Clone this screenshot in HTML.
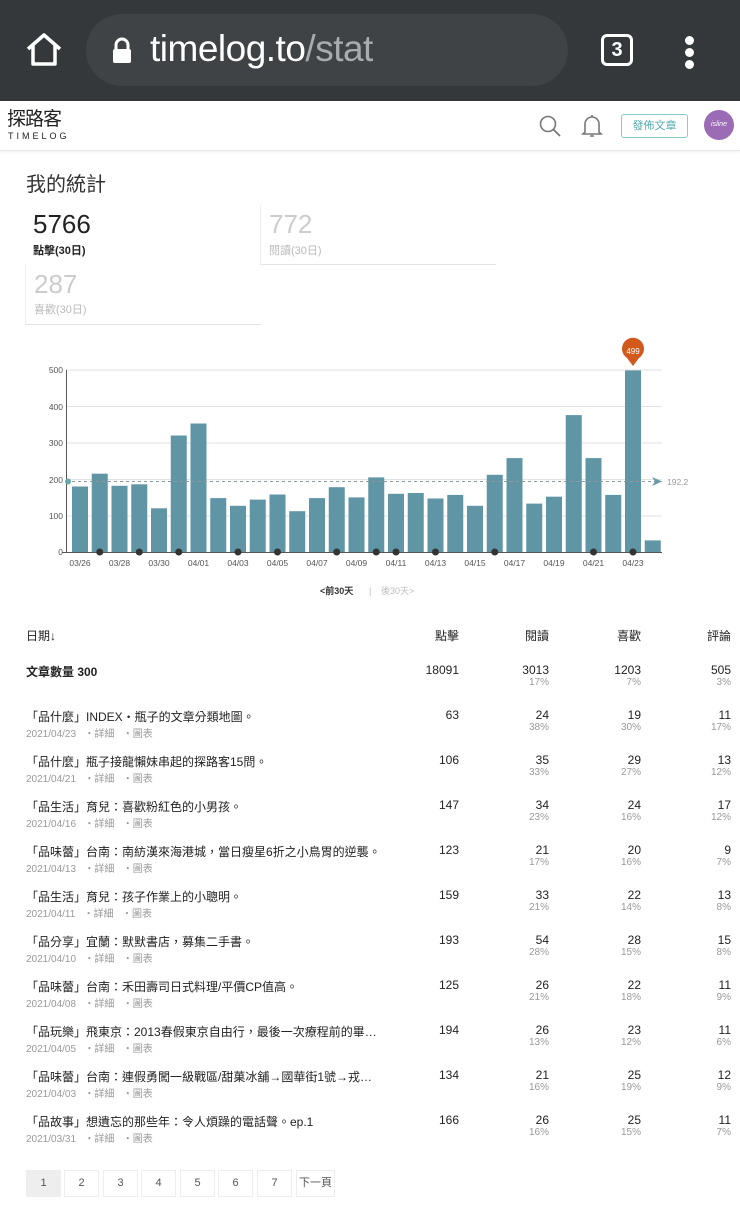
<!DOCTYPE html>
<html><head><meta charset="utf-8"><style>
*{margin:0;padding:0;box-sizing:border-box}
body{width:740px;height:1212px;background:#fff;font-family:"Liberation Sans","Noto Sans CJK TC",sans-serif;color:#222;position:relative;overflow:hidden}
.abs{position:absolute}
.bar{background:#35383b;height:101px;top:0;left:0;width:740px}
.url{left:86px;top:14px;width:482px;height:72px;border-radius:36px;background:#3f4346}
.hdr{top:101px;left:0;width:740px;height:50px;border-bottom:1px solid #e6e6e6;box-shadow:0 1px 3px rgba(0,0,0,.06)}
.r{text-align:right}
.t{font-size:12px;color:#222}
.sub{font-size:10px;color:#999}
.pg{position:absolute;top:1170px;width:35px;height:27px;border:1px solid #eee;font-size:11px;color:#555;text-align:center;line-height:25px}
</style></head><body>
<div class="abs bar"></div>
<div class="abs url"></div>
<svg class="abs" style="left:24px;top:32px" width="40" height="36" viewBox="0 0 40 36"><path d="M4 17 L20 3 L36 17 M9 13 V32 H31 V13" fill="none" stroke="#fff" stroke-width="3.5" stroke-linejoin="round"/></svg>
<svg class="abs" style="left:110px;top:37px" width="24" height="28" viewBox="0 0 24 28"><path d="M6 12 V8 a6 6 0 0 1 12 0 V12" fill="none" stroke="#fff" stroke-width="3"/><rect x="3" y="12" width="18" height="14" rx="2" fill="#fff"/></svg>
<div class="abs" style="left:150px;top:28px;font-size:37px;color:#fff;letter-spacing:-.5px">timelog.to<span style="color:#a9acae">/stat</span></div>
<div class="abs" style="left:601px;top:34px;width:32px;height:32px;border:3px solid #fff;border-radius:6px;color:#fff;font-size:20px;font-weight:bold;text-align:center;line-height:26px">3</div>
<div class="abs" style="left:685px;top:36px;width:9px;height:9px;border-radius:50%;background:#fff"></div>
<div class="abs" style="left:685px;top:48px;width:9px;height:9px;border-radius:50%;background:#fff"></div>
<div class="abs" style="left:685px;top:60px;width:9px;height:9px;border-radius:50%;background:#fff"></div>
<div class="abs hdr"></div>
<div class="abs" style="left:7px;top:110px;font-size:19px;line-height:20px;color:#222;letter-spacing:-1px">探路客</div>
<div class="abs" style="left:8px;top:131px;font-size:9px;line-height:10px;color:#222;letter-spacing:3px">TIMELOG</div>
<svg class="abs" style="left:538px;top:114px" width="24" height="24" viewBox="0 0 24 24"><circle cx="10" cy="10" r="7.5" fill="none" stroke="#777" stroke-width="1.6"/><path d="M15.5 15.5 L22 22" stroke="#777" stroke-width="1.8"/></svg>
<svg class="abs" style="left:581px;top:113px" width="22" height="26" viewBox="0 0 22 26"><path d="M4 19 V11 a7 7 0 0 1 14 0 V19 L20 21 H2 Z M9 23 h4" fill="none" stroke="#777" stroke-width="1.6"/><path d="M11 2 v2" stroke="#777" stroke-width="1.6"/></svg>
<div class="abs" style="left:621px;top:114px;width:67px;height:24px;border:1px solid #8cc;border-radius:3px;color:#5aa;font-size:11px;text-align:center;line-height:22px">發佈文章</div>
<div class="abs" style="left:704px;top:110px;width:30px;height:30px;border-radius:50%;background:#9b6bb5;color:#fff;font-size:7px;font-style:italic;text-align:center;line-height:30px">isline</div>
<div class="abs" style="left:26px;top:168px;font-size:20px;color:#333">我的統計</div>
<div class="abs" style="left:33px;top:209px;font-size:26px;color:#222">5766</div>
<div class="abs" style="left:33px;top:242px;font-size:11px;color:#222;font-weight:bold">點擊(30日)</div>
<div class="abs" style="left:260px;top:205px;width:236px;height:60px;border-left:1px solid #eee;border-bottom:1px solid #e4e4e4"></div>
<div class="abs" style="left:269px;top:209px;font-size:26px;color:#ccc">772</div>
<div class="abs" style="left:269px;top:242px;font-size:11px;color:#bbb">閱讀(30日)</div>
<div class="abs" style="left:25px;top:264px;width:236px;height:61px;border-left:1px solid #eee;border-bottom:1px solid #e4e4e4"></div>
<div class="abs" style="left:34px;top:269px;font-size:26px;color:#ccc">287</div>
<div class="abs" style="left:34px;top:301px;font-size:11px;color:#bbb">喜歡(30日)</div>

<svg class="abs" style="left:0;top:330px" width="740" height="270" viewBox="0 330 740 270" font-family="Liberation Sans" font-size="8.5" fill="#555">
<g stroke="#e2e2e2" stroke-width="1"><line x1="66" y1="370" x2="662" y2="370"/><line x1="66" y1="406.5" x2="662" y2="406.5"/><line x1="66" y1="443" x2="662" y2="443"/><line x1="66" y1="479.5" x2="662" y2="479.5"/><line x1="66" y1="516" x2="662" y2="516"/></g>
<line x1="66.5" y1="370" x2="66.5" y2="552" stroke="#555"/>
<line x1="62" y1="552.5" x2="662" y2="552.5" stroke="#555"/>
<g text-anchor="end"><text x="63" y="373">500</text><text x="63" y="410">400</text><text x="63" y="446">300</text><text x="63" y="483">200</text><text x="63" y="519">100</text><text x="63" y="555">0</text></g>
<g fill="#5f95a5">
<rect x="72" y="486.5" width="16" height="65.5"/><rect x="91.75" y="473.7" width="16" height="78.3"/><rect x="111.5" y="485.8" width="16" height="66.2"/><rect x="131.25" y="484.3" width="16" height="67.7"/><rect x="151" y="508.3" width="16" height="43.7"/><rect x="170.75" y="435.5" width="16" height="116.5"/><rect x="190.5" y="423.5" width="16" height="128.5"/><rect x="210.25" y="498.1" width="16" height="53.9"/><rect x="230" y="505.8" width="16" height="46.2"/><rect x="249.75" y="499.6" width="16" height="52.4"/><rect x="269.5" y="494.5" width="16" height="57.5"/><rect x="289.25" y="511.2" width="16" height="40.8"/><rect x="309" y="498.1" width="16" height="53.9"/><rect x="328.75" y="487.2" width="16" height="64.8"/><rect x="348.5" y="497.4" width="16" height="54.6"/><rect x="368.25" y="477.4" width="16" height="74.6"/><rect x="388" y="493.8" width="16" height="58.2"/><rect x="407.75" y="493" width="16" height="59"/><rect x="427.5" y="498.5" width="16" height="53.5"/><rect x="447.25" y="494.9" width="16" height="57.1"/><rect x="467" y="505.8" width="16" height="46.2"/><rect x="486.75" y="474.8" width="16" height="77.2"/><rect x="506.5" y="458.1" width="16" height="93.9"/><rect x="526.25" y="503.6" width="16" height="48.4"/><rect x="546" y="496.7" width="16" height="55.3"/><rect x="565.75" y="415.1" width="16" height="136.9"/><rect x="585.5" y="458.1" width="16" height="93.9"/><rect x="605.25" y="494.9" width="16" height="57.1"/><rect x="625" y="370.4" width="16" height="181.6"/><rect x="644.75" y="540.4" width="16" height="11.6"/>
</g>
<line x1="66" y1="481.5" x2="662" y2="481.5" stroke="#8a9aa0" stroke-dasharray="3,3"/>
<circle cx="68" cy="481.5" r="3" fill="#6aa"/>
<path d="M652 477 L662 481.5 L652 486 L655 481.5Z" fill="#6a9aa5"/>
<text x="667" y="485" fill="#999">192.2</text>
<g fill="#333"><circle cx="99.75" cy="552" r="3.5"/><circle cx="139.25" cy="552" r="3.5"/><circle cx="178.75" cy="552" r="3.5"/><circle cx="238" cy="552" r="3.5"/><circle cx="277.5" cy="552" r="3.5"/><circle cx="336.75" cy="552" r="3.5"/><circle cx="376.25" cy="552" r="3.5"/><circle cx="396" cy="552" r="3.5"/><circle cx="435.5" cy="552" r="3.5"/><circle cx="494.75" cy="552" r="3.5"/><circle cx="593.5" cy="552" r="3.5"/><circle cx="633" cy="552" r="3.5"/></g>
<g text-anchor="middle"><text x="80" y="566">03/26</text><text x="119.5" y="566">03/28</text><text x="159" y="566">03/30</text><text x="198.5" y="566">04/01</text><text x="238" y="566">04/03</text><text x="277.5" y="566">04/05</text><text x="317" y="566">04/07</text><text x="356.5" y="566">04/09</text><text x="396" y="566">04/11</text><text x="435.5" y="566">04/13</text><text x="475" y="566">04/15</text><text x="514.5" y="566">04/17</text><text x="554" y="566">04/19</text><text x="593.5" y="566">04/21</text><text x="633" y="566">04/23</text></g>
<path d="M633 366 L627 358 A11 11 0 1 1 639 358 Z" fill="#d2581c"/>
<text x="633" y="354" text-anchor="middle" fill="#fff" font-size="8">499</text>
<text x="320" y="594" font-size="9" fill="#333" font-weight="bold">&lt;前30天</text><text x="369" y="594" font-size="9" fill="#bbb">|</text><text x="381" y="594" font-size="9" fill="#bbb">後30天&gt;</text>
</svg>

<div class="abs t" style="left:26px;top:627px">日期↓</div>
<div class="abs t r" style="left:380px;width:79px;top:627px">點擊</div>
<div class="abs t r" style="left:470px;width:79px;top:627px">閱讀</div>
<div class="abs t r" style="left:562px;width:79px;top:627px">喜歡</div>
<div class="abs t r" style="left:652px;width:79px;top:627px">評論</div>

<div class="abs t" style="left:26px;top:663px;font-weight:bold">文章數量 300</div>
<div class="abs t r" style="left:380px;width:79px;top:663px">18091</div>
<div class="abs t r" style="left:470px;width:79px;top:663px">3013<div class="sub">17%</div></div>
<div class="abs t r" style="left:562px;width:79px;top:663px">1203<div class="sub">7%</div></div>
<div class="abs t r" style="left:652px;width:79px;top:663px">505<div class="sub">3%</div></div>

<div class="abs" style="top:708px;left:0;width:740px">
<div style="position:relative;height:45px"><div class="abs t" style="left:26px;top:0">「品什麼」INDEX・瓶子的文章分類地圖。</div><div class="abs sub" style="left:26px;top:17px">2021/04/23 &nbsp;&nbsp;・詳細 &nbsp;&nbsp;・圖表</div><div class="abs t r" style="left:380px;width:79px">63</div><div class="abs t r" style="left:470px;width:79px">24<div class="sub">38%</div></div><div class="abs t r" style="left:562px;width:79px">19<div class="sub">30%</div></div><div class="abs t r" style="left:652px;width:79px">11<div class="sub">17%</div></div></div>
<div style="position:relative;height:45px"><div class="abs t" style="left:26px;top:0">「品什麼」瓶子接龍懶妹串起的探路客15問。</div><div class="abs sub" style="left:26px;top:17px">2021/04/21 &nbsp;&nbsp;・詳細 &nbsp;&nbsp;・圖表</div><div class="abs t r" style="left:380px;width:79px">106</div><div class="abs t r" style="left:470px;width:79px">35<div class="sub">33%</div></div><div class="abs t r" style="left:562px;width:79px">29<div class="sub">27%</div></div><div class="abs t r" style="left:652px;width:79px">13<div class="sub">12%</div></div></div>
<div style="position:relative;height:45px"><div class="abs t" style="left:26px;top:0">「品生活」育兒：喜歡粉紅色的小男孩。</div><div class="abs sub" style="left:26px;top:17px">2021/04/16 &nbsp;&nbsp;・詳細 &nbsp;&nbsp;・圖表</div><div class="abs t r" style="left:380px;width:79px">147</div><div class="abs t r" style="left:470px;width:79px">34<div class="sub">23%</div></div><div class="abs t r" style="left:562px;width:79px">24<div class="sub">16%</div></div><div class="abs t r" style="left:652px;width:79px">17<div class="sub">12%</div></div></div>
<div style="position:relative;height:45px"><div class="abs t" style="left:26px;top:0">「品味蕾」台南：南紡漢來海港城，當日瘦星6折之小鳥胃的逆襲。</div><div class="abs sub" style="left:26px;top:17px">2021/04/13 &nbsp;&nbsp;・詳細 &nbsp;&nbsp;・圖表</div><div class="abs t r" style="left:380px;width:79px">123</div><div class="abs t r" style="left:470px;width:79px">21<div class="sub">17%</div></div><div class="abs t r" style="left:562px;width:79px">20<div class="sub">16%</div></div><div class="abs t r" style="left:652px;width:79px">9<div class="sub">7%</div></div></div>
<div style="position:relative;height:45px"><div class="abs t" style="left:26px;top:0">「品生活」育兒：孩子作業上的小聰明。</div><div class="abs sub" style="left:26px;top:17px">2021/04/11 &nbsp;&nbsp;・詳細 &nbsp;&nbsp;・圖表</div><div class="abs t r" style="left:380px;width:79px">159</div><div class="abs t r" style="left:470px;width:79px">33<div class="sub">21%</div></div><div class="abs t r" style="left:562px;width:79px">22<div class="sub">14%</div></div><div class="abs t r" style="left:652px;width:79px">13<div class="sub">8%</div></div></div>
<div style="position:relative;height:45px"><div class="abs t" style="left:26px;top:0">「品分享」宜蘭：默默書店，募集二手書。</div><div class="abs sub" style="left:26px;top:17px">2021/04/10 &nbsp;&nbsp;・詳細 &nbsp;&nbsp;・圖表</div><div class="abs t r" style="left:380px;width:79px">193</div><div class="abs t r" style="left:470px;width:79px">54<div class="sub">28%</div></div><div class="abs t r" style="left:562px;width:79px">28<div class="sub">15%</div></div><div class="abs t r" style="left:652px;width:79px">15<div class="sub">8%</div></div></div>
<div style="position:relative;height:45px"><div class="abs t" style="left:26px;top:0">「品味蕾」台南：禾田壽司日式料理/平價CP值高。</div><div class="abs sub" style="left:26px;top:17px">2021/04/08 &nbsp;&nbsp;・詳細 &nbsp;&nbsp;・圖表</div><div class="abs t r" style="left:380px;width:79px">125</div><div class="abs t r" style="left:470px;width:79px">26<div class="sub">21%</div></div><div class="abs t r" style="left:562px;width:79px">22<div class="sub">18%</div></div><div class="abs t r" style="left:652px;width:79px">11<div class="sub">9%</div></div></div>
<div style="position:relative;height:45px"><div class="abs t" style="left:26px;top:0">「品玩樂」飛東京：2013春假東京自由行，最後一次療程前的畢…</div><div class="abs sub" style="left:26px;top:17px">2021/04/05 &nbsp;&nbsp;・詳細 &nbsp;&nbsp;・圖表</div><div class="abs t r" style="left:380px;width:79px">194</div><div class="abs t r" style="left:470px;width:79px">26<div class="sub">13%</div></div><div class="abs t r" style="left:562px;width:79px">23<div class="sub">12%</div></div><div class="abs t r" style="left:652px;width:79px">11<div class="sub">6%</div></div></div>
<div style="position:relative;height:45px"><div class="abs t" style="left:26px;top:0">「品味蕾」台南：連假勇闖一級戰區/甜菓冰舖→國華街1號→戎…</div><div class="abs sub" style="left:26px;top:17px">2021/04/03 &nbsp;&nbsp;・詳細 &nbsp;&nbsp;・圖表</div><div class="abs t r" style="left:380px;width:79px">134</div><div class="abs t r" style="left:470px;width:79px">21<div class="sub">16%</div></div><div class="abs t r" style="left:562px;width:79px">25<div class="sub">19%</div></div><div class="abs t r" style="left:652px;width:79px">12<div class="sub">9%</div></div></div>
<div style="position:relative;height:45px"><div class="abs t" style="left:26px;top:0">「品故事」想遺忘的那些年：令人煩躁的電話聲。ep.1</div><div class="abs sub" style="left:26px;top:17px">2021/03/31 &nbsp;&nbsp;・詳細 &nbsp;&nbsp;・圖表</div><div class="abs t r" style="left:380px;width:79px">166</div><div class="abs t r" style="left:470px;width:79px">26<div class="sub">16%</div></div><div class="abs t r" style="left:562px;width:79px">25<div class="sub">15%</div></div><div class="abs t r" style="left:652px;width:79px">11<div class="sub">7%</div></div></div>
</div>

<div class="pg" style="left:26px;background:#eee">1</div>
<div class="pg" style="left:64px">2</div>
<div class="pg" style="left:103px">3</div>
<div class="pg" style="left:141px">4</div>
<div class="pg" style="left:180px">5</div>
<div class="pg" style="left:218px">6</div>
<div class="pg" style="left:257px">7</div>
<div class="pg" style="left:296px;width:39px">下一頁</div>
</body></html>
